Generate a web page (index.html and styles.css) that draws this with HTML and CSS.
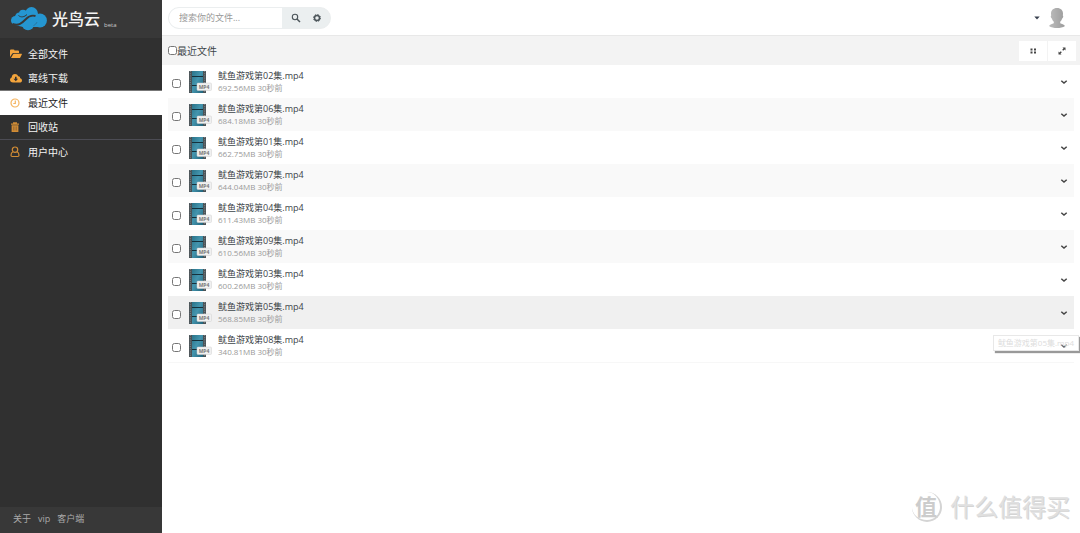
FILE: index.html
```html
<!DOCTYPE html>
<html lang="zh-CN">
<head>
  <meta charset="UTF-8">
  <meta name="viewport" content="width=device-width, initial-scale=1.0">
  <title>最近文件 - 光鸟云</title>
  <link rel="stylesheet" href="styles.css">
</head>
<body>
  <svg class="sprite" aria-hidden="true">
    <symbol id="film" viewBox="0 0 24 24">
      <linearGradient id="film-blue" x1="0" y1="0" x2="1" y2="1">
        <stop offset="0" stop-color="#2a7389"/>
        <stop offset="0.45" stop-color="#4495ae"/>
        <stop offset="1" stop-color="#22647c"/>
      </linearGradient>
      <rect x="0" y="1" width="17" height="22" fill="#4b5357"/>
      <rect x="3" y="1" width="11" height="22" fill="url(#film-blue)"/>
      <path d="M3 6.5h11M3 15.5h11" stroke="#15313c" stroke-width="1"/>
      <path d="M1.3 1v22M15.7 1v22" stroke="#8a979c" stroke-width=".8" stroke-dasharray="1 1.2"/>
      <rect x="8" y="13" width="14.5" height="7.5" rx="1" fill="#f0f0f0" stroke="#d0d0d0" stroke-width=".5"/>
    </symbol>
    <symbol id="chevron" viewBox="0 0 8 8">
      <path d="M1.3 2.700 4 5l2.700-2.300" fill="none" stroke="#444" stroke-width="1.500"/>
    </symbol>
  </svg>

  <aside class="sidebar">
    <a href="#" class="logo">
      <svg width="36" height="24" viewBox="0 0 36 24" aria-hidden="true">
        <g fill="#2596d1">
          <circle cx="4.500" cy="13.500" r="4.500"/>
          <circle cx="8.500" cy="10" r="4.500"/>
          <circle cx="12" cy="6.800" r="4"/>
          <circle cx="20.500" cy="6.500" r="6.400"/>
          <circle cx="29" cy="13.500" r="6.900"/>
          <circle cx="17" cy="16.800" r="6.400"/>
          <path d="M4 9h22l6 11H12l-8-2z"/>
        </g>
        <path d="M1.500 16.800C8 19.500 11.500 15.500 15 12c3-3.200 6-4 9.500-3" fill="none" stroke="#383838" stroke-width="1.900"/>
        <path d="M7.500 8.500c2.500 2.300 6 1.500 8.500-1" fill="none" stroke="#383838" stroke-width="1"/>
        <path d="M22.500 18.500c1.800-.8 3-2 3.500-3.500" fill="none" stroke="#2b6f96" stroke-width=".8"/>
      </svg>
      <span class="logo-name">光鸟云</span>
      <span class="logo-tag">beta</span>
    </a>

    <nav>
      <ul class="menu">
        <li><a href="#all">
          <svg width="12" height="12" viewBox="0 0 12 12" fill="#f3a43c" aria-hidden="true"><path d="M0 9V2.500q0-1 1-1h2.500q1 0 1 1H8q1 0 1 1V5H3.500Q2.500 5 2 6zM1 10l2-3.500q.4-.7 1-.7h7.500q.7 0 .3.800L10.300 9.500q-.3.500-1 .5z"/></svg>
          全部文件</a></li>
        <li><a href="#offline">
          <svg width="12" height="12" viewBox="0 0 12 12" aria-hidden="true"><path fill="#f3a43c" d="M3 10.500C1.200 10.500 0 9.300 0 7.800c0-1.200.7-2 1.700-2.400C1.800 3.200 3.200 2 5 2c1.500 0 2.700.8 3.100 2.200 1.300-.2 2.200.8 2 2C11.300 6.500 12 7.200 12 8.400c0 1.300-1 2.100-2.200 2.100z"/><path fill="#303030" d="M5 4.800h1.600v2h1.500L5.800 9.300 3.500 6.800H5z"/></svg>
          离线下载</a></li>
        <li class="active"><a href="#recent">
          <svg width="12" height="12" viewBox="0 0 12 12" fill="none" stroke="#f5b45f" stroke-width="1.200" aria-hidden="true"><circle cx="5" cy="6" r="4"/><path d="M5.300 3.500v3H3.300"/></svg>
          最近文件</a></li>
        <li class="line"><a href="#recycle">
          <svg width="12" height="12" viewBox="0 0 12 12" aria-hidden="true"><path fill="#d18c35" d="M3 1.300h4v1.200h2v1.300H1V2.500h2zM1.600 4.300h6.800V11H1.600z"/><path d="M3.500 5.500v4M5 5.500v4M6.500 5.500v4" stroke="#8a6030" stroke-width=".6"/></svg>
          回收站</a></li>
        <li><a href="#user">
          <svg width="12" height="12" viewBox="0 0 12 12" fill="none" stroke="#d18c35" stroke-width="1.200" aria-hidden="true"><circle cx="5" cy="3.700" r="2.700"/><path d="M3 5.700C1.500 6.300 1 7.800 1 9.300q0 1.200 1.200 1.200h5.600Q9 10.500 9 9.300C9 7.800 8.500 6.300 7 5.700"/></svg>
          用户中心</a></li>
      </ul>
    </nav>

    <footer class="sidebar-footer">
      <a href="#about">关于</a>
      <a href="#vip">vip</a>
      <a href="#client">客户端</a>
    </footer>
  </aside>

  <main class="main">
    <header class="topbar">
      <form class="search">
        <input type="text" placeholder="搜索你的文件..." aria-label="搜索你的文件">
        <button type="button" aria-label="搜索">
          <svg width="10" height="10" viewBox="0 0 10 10" fill="none" stroke="#4d565b" aria-hidden="true"><circle cx="4" cy="4" r="2.700" stroke-width="1.100"/><path d="m6 6 3 3" stroke-width="1.500"/></svg>
        </button>
        <button type="button" aria-label="设置">
          <svg width="10" height="10" viewBox="0 0 10 10" fill="none" stroke="#4d565b" aria-hidden="true"><circle cx="5" cy="5" r="2.500" stroke-width="1.500"/><circle cx="5" cy="5" r="3.500" stroke-width="1" stroke-dasharray="1.375 1.375"/></svg>
        </button>
      </form>
      <button type="button" class="account" aria-label="账户">
        <svg width="6" height="4" viewBox="0 0 6 4" aria-hidden="true"><path d="M.3.500h5.400L3 3.500z" fill="#38404f"/></svg>
        <svg width="18" height="20" viewBox="0 0 18 20" aria-hidden="true">
          <linearGradient id="face" x1="0" y1="0" x2="1" y2="0"><stop offset="0" stop-color="#bcbcbc"/><stop offset="1" stop-color="#9c9c9c"/></linearGradient>
          <path fill="url(#face)" d="M9 0c3.800 0 6 2.300 6 5.600 0 .7-.1 1.300-.2 1.900.8.2.5 2.300-.6 2.900-.5 1.500-1.200 2.600-2 3.300v1.500c1.500 1 3.800 1 4.800 2.800C15 19.500 12 20 9 20s-6-.5-8-2c1-1.800 3.300-1.800 4.800-2.800v-1.500c-.8-.7-1.500-1.800-2-3.300-1.100-.6-1.400-2.700-.6-2.900C3.100 6.900 3 6.300 3 5.600 3 2.300 5.200 0 9 0z"/>
        </svg>
      </button>
    </header>

    <div class="toolbar">
      <label class="title"><input type="checkbox">最近文件</label>
      <div class="view-buttons">
        <button type="button" aria-label="网格视图">
          <svg width="8" height="8" viewBox="0 0 8 8" fill="#444" aria-hidden="true"><path d="M1.500 1.500h2v2h-2zM5 1.500h2v2H5zM1.500 4.500h2v2h-2zM5 4.500h2v2H5z"/></svg>
        </button>
        <button type="button" aria-label="全屏">
          <svg width="8" height="8" viewBox="0 0 8 8" fill="#444" aria-hidden="true"><path d="M7.500.5v3l-1-1-1.300 1.300-1-1 1.300-1.300-1-1zM.5 7.500v-3l1 1 1.300-1.300 1 1L2.500 6.500l1 1z"/></svg>
        </button>
      </div>
    </div>

    <ul class="files" id="files"></ul>
  </main>

  <div class="tooltip">鱿鱼游戏第05集.mp4</div>
  <div class="watermark"><span class="seal">值</span>什么值得买</div>

  <script src="files.js"></script>
</body>
</html>
```

FILE: styles.css
```css
:root {
  --dark: #303030;
  --dark-light: #383838;
  --grey: #f3f3f3;
}

* {
  box-sizing: border-box;
}

body {
  display: flex;
  min-height: 100vh;
  margin: 0;
  background: #fff;
  color: #3c4448;
  font-family: "Open Sans", "Noto Sans CJK SC", sans-serif;
  font-size: 9px;
  line-height: 12px;
}

ul {
  list-style: none;
  margin: 0;
  padding: 0;
}

a {
  color: inherit;
  text-decoration: none;
}

button {
  display: flex;
  align-items: center;
  justify-content: center;
  padding: 0;
  border: none;
  background: none;
  cursor: pointer;
}

input[type="checkbox"] {
  width: 9px;
  height: 9px;
  margin: 0;
}

.sprite {
  position: absolute;
  width: 0;
  height: 0;
}

/* sidebar */
.sidebar {
  display: flex;
  flex-direction: column;
  flex: none;
  width: 162px;
  background: var(--dark);
  color: #f4f4f4;
}

.logo {
  display: flex;
  align-items: center;
  height: 38px;
  padding-left: 11px;
  background: var(--dark-light);
}

.logo-name {
  margin-left: 5px;
  font-size: 16px;
  font-weight: 500;
  line-height: 20px;
}

.logo-tag {
  align-self: flex-end;
  margin-left: 4px;
  padding-bottom: 7px;
  color: #ccc;
  font-size: 6px;
}

.menu {
  padding-top: 4px;
  font-size: 10px;
}

.menu a {
  display: flex;
  align-items: center;
  gap: 6px;
  height: 24px;
  padding-left: 10px;
}

.menu .active {
  border-top: 1px solid #777;
  background: #fff;
  color: #222;
}

.menu .line {
  border-bottom: 1px solid #4c4c54;
}

.sidebar-footer {
  display: flex;
  align-items: center;
  gap: 7px;
  height: 26px;
  margin-top: auto;
  padding: 0 13px 3px;
  background: var(--dark-light);
  color: #aaa;
}

/* content */
.main {
  flex: 1;
  min-width: 0;
}

.topbar {
  display: flex;
  align-items: center;
  justify-content: space-between;
  height: 36px;
  padding: 0 14px 0 6px;
  border-bottom: 1px solid #e8e8e8;
}

.search {
  display: flex;
  height: 22px;
  overflow: hidden;
  border: 1px solid #ebeeef;
  border-radius: 11px;
  background: #ebeff0;
}

.search input {
  width: 113px;
  padding: 0 10px;
  border: none;
  outline: none;
  font: inherit;
}

.search input::placeholder {
  color: #999;
}

.search button {
  width: 21px;
}

.search button:first-of-type {
  margin-left: 3px;
}

.search button:last-of-type {
  margin-right: 3px;
}

.account {
  gap: 8px;
}

.toolbar {
  display: flex;
  align-items: center;
  justify-content: space-between;
  height: 29px;
  padding: 0 4px 0 6px;
  background: var(--grey);
}

.title {
  display: flex;
  align-items: center;
  font-size: 10px;
}

.view-buttons {
  display: flex;
  gap: 1px;
}

.view-buttons button {
  width: 28px;
  height: 20px;
  background: #fff;
}

.files {
  margin: 0 6px;
  border-bottom: 1px solid #f7f7f7;
}

.files li {
  display: flex;
  align-items: center;
  height: 33px;
  padding: 1px 6px 0 4px;
}

.files li:nth-child(even) {
  background: #f9f9f9;
}

.files li.hover {
  background: #f0f0f0;
}

.files label {
  display: flex;
  align-items: center;
  flex: 1;
}

.files input {
  margin-top: 3px;
}

.film {
  width: 24px;
  height: 24px;
  margin: 0 5px 0 8px;
}

.film-type {
  fill: #777;
  font-size: 5px;
  font-weight: bold;
}

.name,
.meta {
  display: block;
}

.meta {
  color: #999;
  font-size: 8px;
}

/* tooltip over the list */
.tooltip {
  position: absolute;
  top: 335px;
  right: 1px;
  padding: 1px 4px;
  border: 1px solid #e8e8e8;
  box-shadow: 2px 2px 1px #999;
  background: rgba(255, 255, 255, 0.2);
  color: #ddd;
  font-size: 8px;
}

.watermark {
  display: flex;
  position: absolute;
  right: 10px;
  bottom: 10px;
  align-items: center;
  gap: 8px;
  color: #e0e0e0;
  font-size: 24px;
  line-height: 32px;
  text-shadow: 1px 1px 0 #d4d4d4;
}

.seal {
  width: 30px;
  height: 30px;
  border-right: 2px solid #d4d4d4;
  border-bottom: 2px solid #d4d4d4;
  border-radius: 50%;
  color: #ccc;
  font-size: 22px;
  font-weight: bold;
  line-height: 28px;
  text-align: center;
  text-shadow: none;
}
```

FILE: files.js
```js
const files = [
  ["02", "692.56MB"],
  ["06", "684.18MB"],
  ["01", "662.75MB"],
  ["07", "644.04MB"],
  ["04", "611.43MB"],
  ["09", "610.56MB"],
  ["03", "600.26MB"],
  ["05", "568.85MB"],
  ["08", "340.81MB"]
];

document.getElementById("files").innerHTML = files.map(([num, size]) => `
  <li class="${num === "05" ? "hover" : ""}">
    <label>
      <input type="checkbox">
      <svg class="film" viewBox="0 0 24 24">
        <use href="#film"/>
        <text x="15" y="19" text-anchor="middle" class="film-type">MP4</text>
      </svg>
      <span>
        <span class="name">鱿鱼游戏第${num}集.mp4</span>
        <span class="meta">${size} 30秒前</span>
      </span>
    </label>
    <button type="button" aria-label="更多操作"><svg width="8" height="8"><use href="#chevron"/></svg></button>
  </li>`).join("");
```
